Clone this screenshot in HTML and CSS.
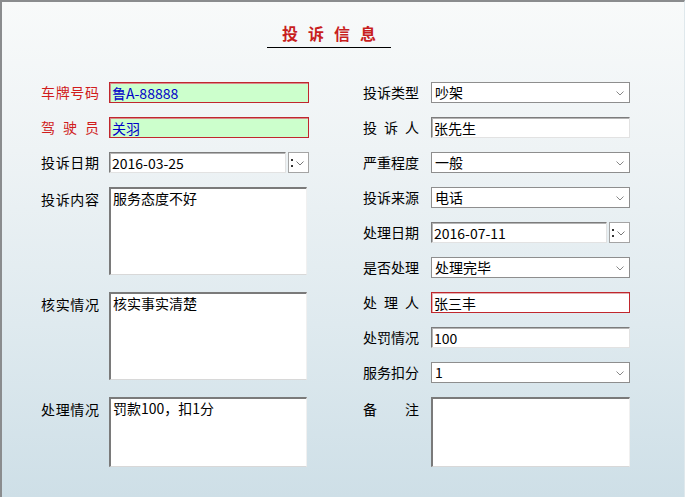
FILE: index.html
```html
<!DOCTYPE html>
<html>
<head>
  <title>投诉信息</title>
  <meta charset="utf-8">
  <link rel="stylesheet" href="styles.css">
</head>
<body>
  <div class="window">
    <div class="title">投诉信息</div>

    <div class="form">
      <!-- left column: vehicle, driver and complaint text -->
      <div class="col col-left">
        <div class="row">
          <label class="req">车牌号码</label>
          <input class="text hot" value="鲁A-88888">
        </div>
        <div class="row">
          <label class="req">驾驶员</label>
          <input class="text hot" value="关羽">
        </div>
        <div class="row">
          <label>投诉日期</label>
          <div class="date">
            <input class="text" value="2016-03-25">
            <span class="date-btn"><i class="dots"></i><svg width="8" height="5" viewBox="0 0 8 5"><path d="M0.5 0.5 L4 4 L7.5 0.5" fill="none" stroke="#777" stroke-width="1"/></svg></span>
          </div>
        </div>
        <div class="row tall">
          <label>投诉内容</label>
          <textarea class="memo h88">服务态度不好</textarea>
        </div>
        <div class="row tall">
          <label>核实情况</label>
          <textarea class="memo h88">核实事实清楚</textarea>
        </div>
        <div class="row tall">
          <label>处理情况</label>
          <textarea class="memo h70">罚款100，扣1分</textarea>
        </div>
      </div>

      <!-- right column: complaint details and handling -->
      <div class="col col-right">
        <div class="row">
          <label>投诉类型</label>
          <div class="combo"><span>吵架</span><svg width="8" height="5" viewBox="0 0 8 5"><path d="M0.5 0.5 L4 4 L7.5 0.5" fill="none" stroke="#888" stroke-width="1"/></svg></div>
        </div>
        <div class="row">
          <label>投诉人</label>
          <input class="text" value="张先生">
        </div>
        <div class="row">
          <label>严重程度</label>
          <div class="combo"><span>一般</span><svg width="8" height="5" viewBox="0 0 8 5"><path d="M0.5 0.5 L4 4 L7.5 0.5" fill="none" stroke="#888" stroke-width="1"/></svg></div>
        </div>
        <div class="row">
          <label>投诉来源</label>
          <div class="combo"><span>电话</span><svg width="8" height="5" viewBox="0 0 8 5"><path d="M0.5 0.5 L4 4 L7.5 0.5" fill="none" stroke="#888" stroke-width="1"/></svg></div>
        </div>
        <div class="row">
          <label>处理日期</label>
          <div class="date">
            <input class="text" value="2016-07-11">
            <span class="date-btn"><i class="dots"></i><svg width="8" height="5" viewBox="0 0 8 5"><path d="M0.5 0.5 L4 4 L7.5 0.5" fill="none" stroke="#777" stroke-width="1"/></svg></span>
          </div>
        </div>
        <div class="row">
          <label>是否处理</label>
          <div class="combo"><span>处理完毕</span><svg width="8" height="5" viewBox="0 0 8 5"><path d="M0.5 0.5 L4 4 L7.5 0.5" fill="none" stroke="#888" stroke-width="1"/></svg></div>
        </div>
        <div class="row">
          <label>处理人</label>
          <input class="text mark" value="张三丰">
        </div>
        <div class="row">
          <label>处罚情况</label>
          <input class="text" value="100">
        </div>
        <div class="row">
          <label>服务扣分</label>
          <div class="combo"><span>1</span><svg width="8" height="5" viewBox="0 0 8 5"><path d="M0.5 0.5 L4 4 L7.5 0.5" fill="none" stroke="#888" stroke-width="1"/></svg></div>
        </div>
        <div class="row tall">
          <label>备注</label>
          <textarea class="memo h70"></textarea>
        </div>
      </div>
    </div>
  </div>
</body>
</html>
```

FILE: styles.css
```css
body, html {
  margin: 0;
  padding: 0;
  background: #fff;
}
body {
  font-family: "Noto Sans CJK SC", "Liberation Sans", sans-serif;
  font-size: 14px;
  color: #000;
}
.window {
  box-sizing: border-box;
  width: 685px;
  height: 497px;
  border-top: 2px solid #8a8c8e;
  border-left: 2px solid #8a8c8e;
  border-right: 1px solid #dfe8ec;
  background: linear-gradient(#f8fafa 0%, #eef3f5 30%, #dfeaef 65%, #cedfe7 100%);
}
.title {
  width: 124px;
  margin: 21px 0 0 265px;
  padding-bottom: 4px;
  border-bottom: 1px solid #000;
  text-align: center;
  font-size: 16px;
  line-height: 20px;
  font-weight: bold;
  letter-spacing: 10px;
  text-indent: 10px;
  color: #c81e1e;
}
.form {
  display: flex;
  margin: 34px 0 0 39px;
  gap: 54px;
}
.col {
  display: flex;
  flex-direction: column;
  gap: 14px;
}
.row {
  display: grid;
  align-items: center;
}
.col-left .row {
  grid-template-columns: 58px 200px;
  column-gap: 10px;
}
.col-right .row {
  grid-template-columns: 56px 199px;
  column-gap: 12px;
}
.row.tall {
  align-items: start;
}
.row.tall + .row.tall {
  margin-top: 3px;
}
label {
  display: block;
  height: 21px;
  line-height: 21px;
  text-align: justify;
  text-align-last: justify;
  white-space: nowrap;
}
.row.tall label {
  padding-top: 2px;
}
label.req {
  color: #d01c1c;
}

/* sunken edit boxes */
.text, .memo {
  box-sizing: border-box;
  margin: 0;
  font: inherit;
  color: #000;
  background: #fff;
  border: 1px solid;
  border-color: #7c7c7c #e2e2e2 #e2e2e2 #7c7c7c;
  box-shadow: inset 1px 1px 0 #b4b4b4;
  outline: none;
}
.text {
  height: 21px;
  width: 100%;
  padding: 0 2px;
  line-height: 19px;
}
.text.hot {
  background: #ccffcc;
  color: #0000c8;
  border-color: #c0272d;
  box-shadow: inset 1px 1px 0 #d88a8c;
}
.text.mark {
  border-color: #c0272d;
  box-shadow: inset 1px 1px 0 #e3b0b1;
}
.memo {
  display: block;
  width: 198px;
  padding: 0 2px;
  resize: none;
  line-height: 18px;
  border-width: 2px 1px 1px 2px;
  border-color: #7a7a7a #f0f0f0 #d8d8d8 #7a7a7a;
  box-shadow: none;
}
.col-right .memo {
  width: 199px;
}
.h88 { height: 88px; }
.h70 { height: 70px; }

/* drop-down lists */
.combo {
  box-sizing: border-box;
  height: 21px;
  display: flex;
  align-items: center;
  justify-content: space-between;
  padding: 0 5px 0 3px;
  background: #fff;
  border: 1px solid #8e8e8e;
  line-height: 19px;
}
.combo svg {
  margin-top: 2px;
}

/* date edit with its picker button */
.date {
  display: flex;
  gap: 2px;
}
.date .text {
  flex: 1;
}
.date-btn {
  box-sizing: border-box;
  width: 21px;
  height: 21px;
  flex: none;
  display: flex;
  align-items: center;
  gap: 3px;
  padding-left: 2px;
  background: #fff;
  border: 1px solid #a4a4a4;
}
.dots {
  width: 2px;
  height: 8px;
  background: linear-gradient(#333 0 2px, transparent 2px 6px, #333 6px 8px);
}
.date-btn svg {
  margin-top: 2px;
}
```
